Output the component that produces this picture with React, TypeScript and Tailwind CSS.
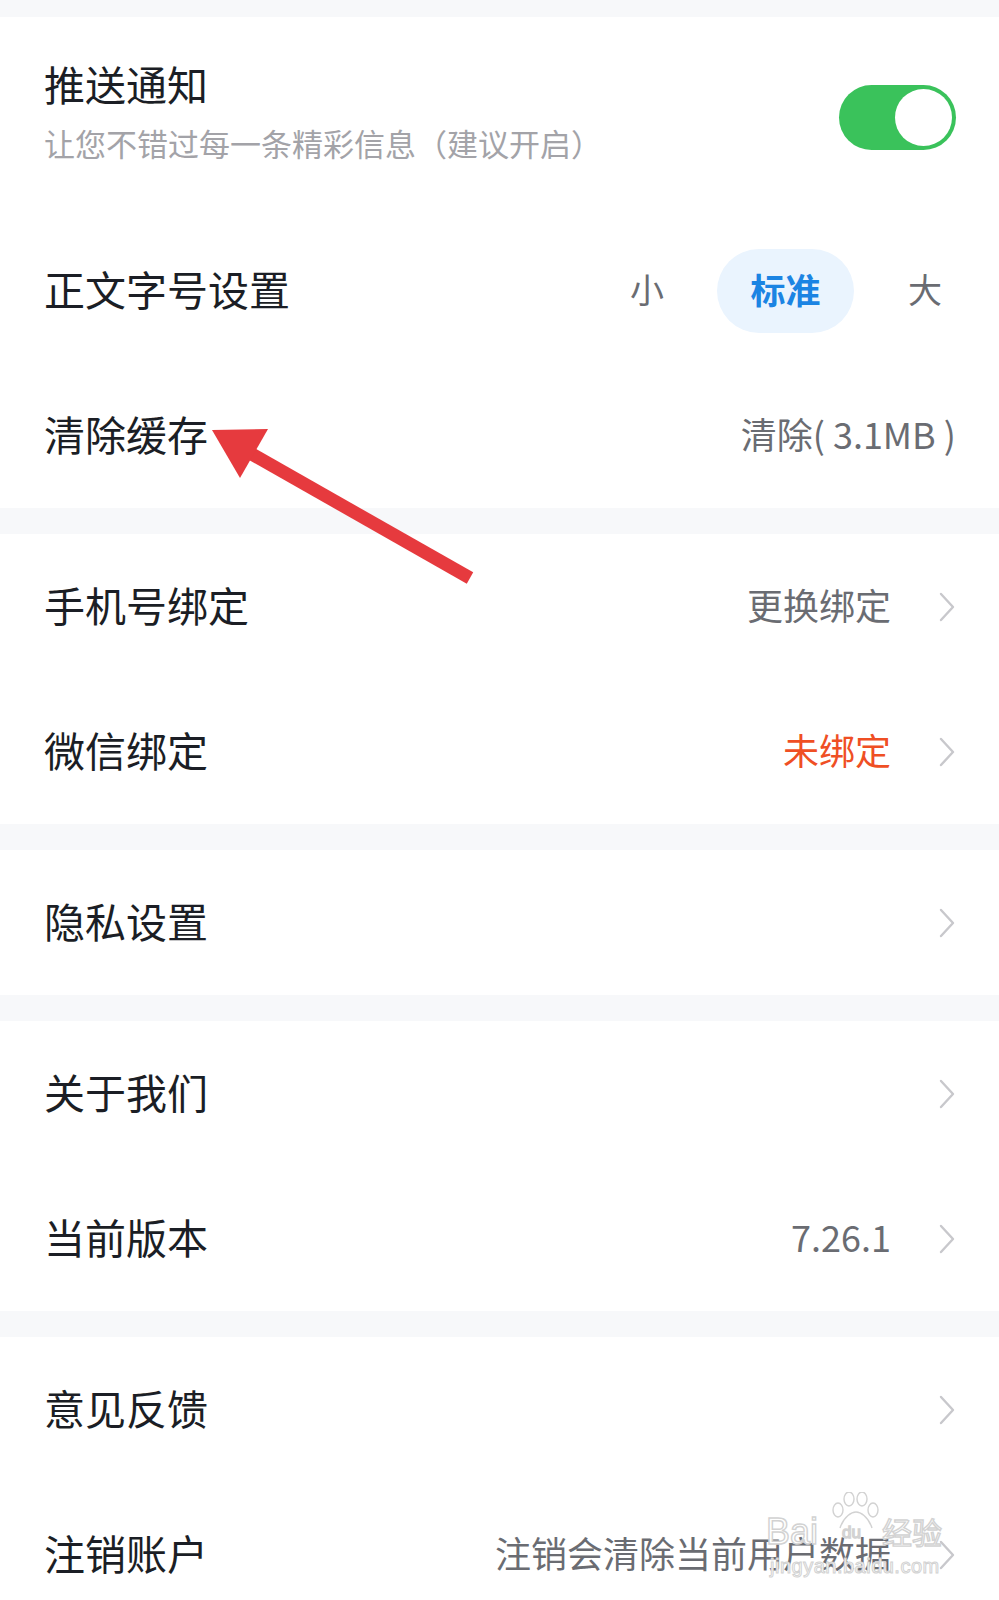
import React from "react";

const FONT = '"Noto Sans CJK SC", "Noto Sans", sans-serif';

function Chevron() {
  return (
    <svg width="18" height="32" viewBox="0 0 18 32" className="shrink-0">
      <polyline points="3,3 15,16 3,29" fill="none" stroke="#c8c8cc" strokeWidth="2.4" strokeLinecap="round" strokeLinejoin="round" />
    </svg>
  );
}

function Row({
  title,
  right,
  rightClass = "text-[#6a6c72]",
  chevron = true,
}: {
  title: string;
  right?: string;
  rightClass?: string;
  chevron?: boolean;
}) {
  return (
    <div className="h-[145px] flex items-center justify-between pl-[44px] pr-[43px]">
      <div className="text-[41px] leading-none text-[#1b1e25] -mt-[5px]">{title}</div>
      <div className="flex items-center">
        {right && <div className={`text-[36px] leading-none -mt-[5px] ${rightClass}`}>{right}</div>}
        {chevron && <div className="ml-[47px] flex items-center"><Chevron /></div>}
      </div>
    </div>
  );
}

const wmStroke = { WebkitTextStroke: "1.4px #d2d2d2" } as React.CSSProperties;

export default function App() {
  return (
    <div className="relative w-[999px] h-[1600px] bg-[#f7f8fa] overflow-hidden" style={{ fontFamily: FONT }}>
      <div className="h-[17px]" />
      {/* Group 1 */}
      <div className="bg-white">
        <div className="h-[201px] flex items-start justify-between pl-[44px] pr-[43px]">
          <div className="flex flex-col pt-[46px]">
            <div className="text-[41px] leading-none text-[#1b1e25]">推送通知</div>
            <div className="text-[31px] leading-none text-[#a3a3a8] mt-[23px]">让您不错过每一条精彩信息（建议开启）</div>
          </div>
          <div className="mt-[68px] w-[117px] h-[65px] rounded-full bg-[#3ac25b] flex items-center justify-end pr-[4px]">
            <div className="w-[57px] h-[57px] rounded-full bg-white" />
          </div>
        </div>
        <div className="h-[145px] flex items-center justify-between pl-[44px] pr-[43px]">
          <div className="text-[41px] leading-none text-[#1b1e25] -mt-[5px]">正文字号设置</div>
          <div className="flex items-center">
            <div className="text-[34px] leading-none text-[#6a6c72] -mt-[4px]">小</div>
            <div className="ml-[53px] w-[137px] h-[84px] rounded-full bg-[#eaf4fe] flex items-center justify-center">
              <span className="text-[35px] leading-none font-bold text-[#1b84e3] -mt-[4px]">标准</span>
            </div>
            <div className="ml-[54px] mr-[14px] text-[34px] leading-none text-[#6a6c72] -mt-[4px]">大</div>
          </div>
        </div>
        <Row title="清除缓存" right="清除( 3.1MB )" chevron={false} />
      </div>

      {/* Group 2 */}
      <div className="bg-white mt-[26px]">
        <Row title="手机号绑定" right="更换绑定" />
        <Row title="微信绑定" right="未绑定" rightClass="text-[#ef4f24]" />
      </div>

      {/* Group 3 */}
      <div className="bg-white mt-[26px]">
        <Row title="隐私设置" />
      </div>

      {/* Group 4 */}
      <div className="bg-white mt-[26px]">
        <Row title="关于我们" />
        <Row title="当前版本" right="7.26.1" />
      </div>

      {/* Group 5 */}
      <div className="bg-white mt-[26px]">
        <Row title="意见反馈" />
        <Row title="注销账户" right="注销会清除当前用户数据" />
      </div>

      {/* Red annotation arrow */}
      <svg className="absolute left-0 top-0 pointer-events-none" width="999" height="1600" viewBox="0 0 999 1600">
        <line x1="470" y1="578" x2="250" y2="453" stroke="#e63a3e" strokeWidth="13" />
        <polygon points="212,430 268,429 240,478" fill="#e63a3e" />
      </svg>

      {/* Watermark */}
      <div className="absolute left-[764px] top-[1492px] w-[190px] h-[90px] pointer-events-none">
        <svg className="absolute left-[66px] top-0" width="52" height="40" viewBox="0 0 52 40">
          <g fill="none" stroke="#d2d2d2" strokeWidth="1.4">
            <ellipse cx="8" cy="18" rx="5" ry="7" />
            <ellipse cx="19" cy="7" rx="5" ry="7" />
            <ellipse cx="32" cy="7" rx="5" ry="7" />
            <ellipse cx="43" cy="18" rx="5" ry="7" />
            <path d="M10 36 C14 24 22 20 26 20 C30 20 38 24 42 36" />
          </g>
        </svg>
        <span
          className="absolute left-[2px] top-[22px] text-[36px] leading-none text-white"
          style={{ fontFamily: '"Liberation Sans", sans-serif', ...wmStroke }}
        >
          Bai
        </span>
        <span
          className="absolute left-[78px] top-[32px] text-[17px] leading-none text-white"
          style={{ fontFamily: '"Liberation Sans", sans-serif', ...wmStroke }}
        >
          du
        </span>
        <span className="absolute left-[118px] top-[24px] text-[30px] leading-none text-white" style={wmStroke}>
          经验
        </span>
        <span
          className="absolute left-[6px] top-[64px] text-[20px] leading-none text-white tracking-[0.5px]"
          style={{ fontFamily: '"Liberation Sans", sans-serif', WebkitTextStroke: "1px #d2d2d2" }}
        >
          jingyan.baidu.com
        </span>
      </div>
    </div>
  );
}
